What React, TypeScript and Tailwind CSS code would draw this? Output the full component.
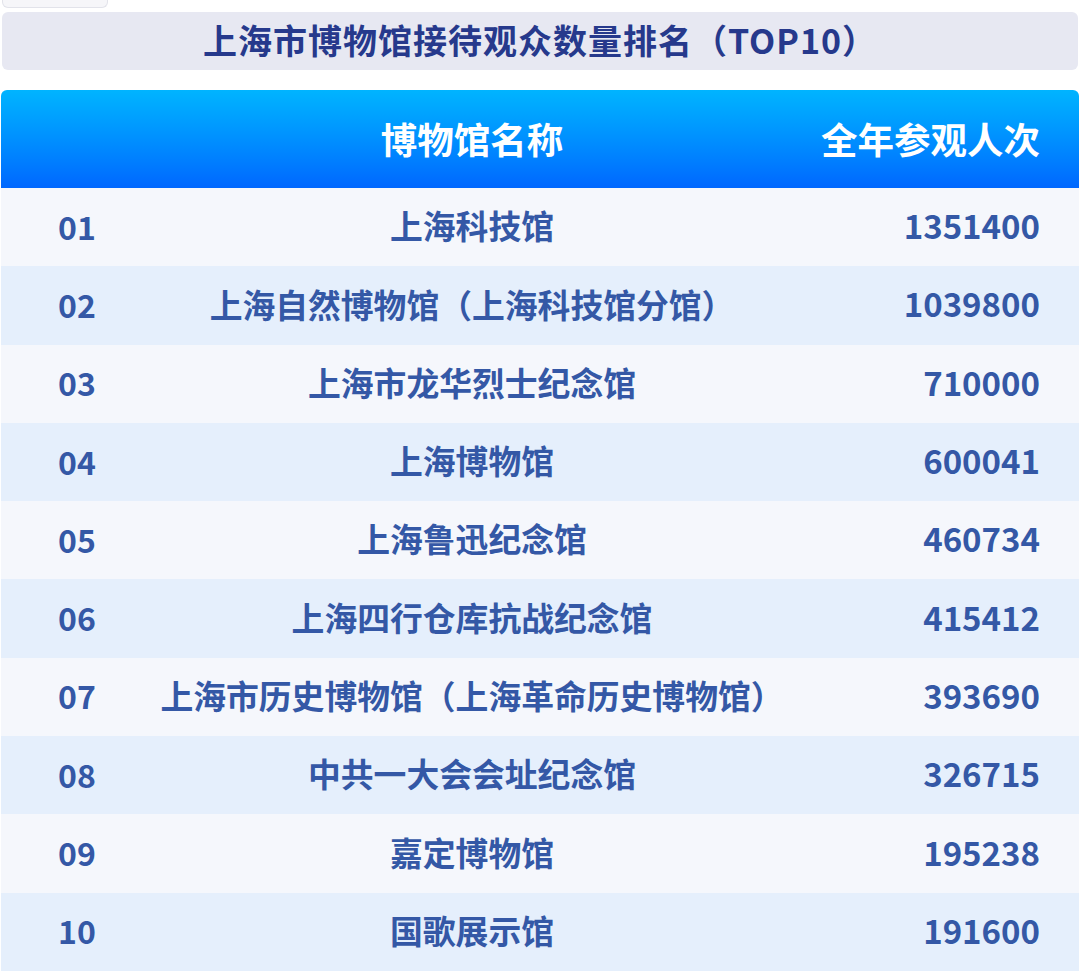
import React from 'react';

interface Row { rank: string; name: string; visitors: string; }

const ROWS: Row[] = [
  { rank: '01', name: '上海科技馆', visitors: '1351400' },
  { rank: '02', name: '上海自然博物馆（上海科技馆分馆）', visitors: '1039800' },
  { rank: '03', name: '上海市龙华烈士纪念馆', visitors: '710000' },
  { rank: '04', name: '上海博物馆', visitors: '600041' },
  { rank: '05', name: '上海鲁迅纪念馆', visitors: '460734' },
  { rank: '06', name: '上海四行仓库抗战纪念馆', visitors: '415412' },
  { rank: '07', name: '上海市历史博物馆（上海革命历史博物馆）', visitors: '393690' },
  { rank: '08', name: '中共一大会会址纪念馆', visitors: '326715' },
  { rank: '09', name: '嘉定博物馆', visitors: '195238' },
  { rank: '10', name: '国歌展示馆', visitors: '191600' },
];

const FONT = { fontFamily: '"Noto Sans CJK SC", "Noto Sans", sans-serif' };

export default function App() {
  return (
    <div className="w-[1080px] h-[971px] overflow-hidden bg-white" style={FONT}>
      {/* bottom edge of the previous card */}
      <div className="ml-[2px] w-[106px] h-[8px] rounded-b-md border border-t-0 border-[#e2e3ea] bg-[#f6f6f9]" />

      {/* title */}
      <div className="mx-[2px] mt-[4px] h-[58px] rounded-md bg-[#e7e8f2] flex items-center justify-center">
        <h1 className="text-[34px] leading-none font-bold text-[#26398c] tracking-[1px] -mt-[2px]">
          上海市博物馆接待观众数量排名（TOP10）
        </h1>
      </div>

      {/* table */}
      <div className="mt-[20px] mx-[1px]">
        <div className="h-[98px] rounded-t-md bg-gradient-to-b from-[#00b4ff] to-[#0067ff] flex items-center text-white font-bold">
          <div className="w-[130px]" />
          <div className="flex-1 text-center text-[36.5px] leading-none">博物馆名称</div>
          <div className="w-[266px] pr-[39px] text-right text-[36.5px] leading-none">全年参观人次</div>
        </div>

        {ROWS.map((r, i) => (
          <div
            key={r.rank}
            className={`h-[78.3px] flex items-center font-bold text-[#3458a6] ${i % 2 === 0 ? 'bg-[#f5f7fc]' : 'bg-[#e5effc]'}`}
          >
            <div className="w-[130px] pl-[57px] text-[32px] leading-none -mt-[3px]">{r.rank}</div>
            <div className="flex-1 text-center text-[32.8px] leading-none whitespace-nowrap -mt-[3px]">{r.name}</div>
            <div className="w-[266px] pr-[39px] text-right text-[33px] leading-none -mt-[3px]">{r.visitors}</div>
          </div>
        ))}
      </div>
    </div>
  );
}
